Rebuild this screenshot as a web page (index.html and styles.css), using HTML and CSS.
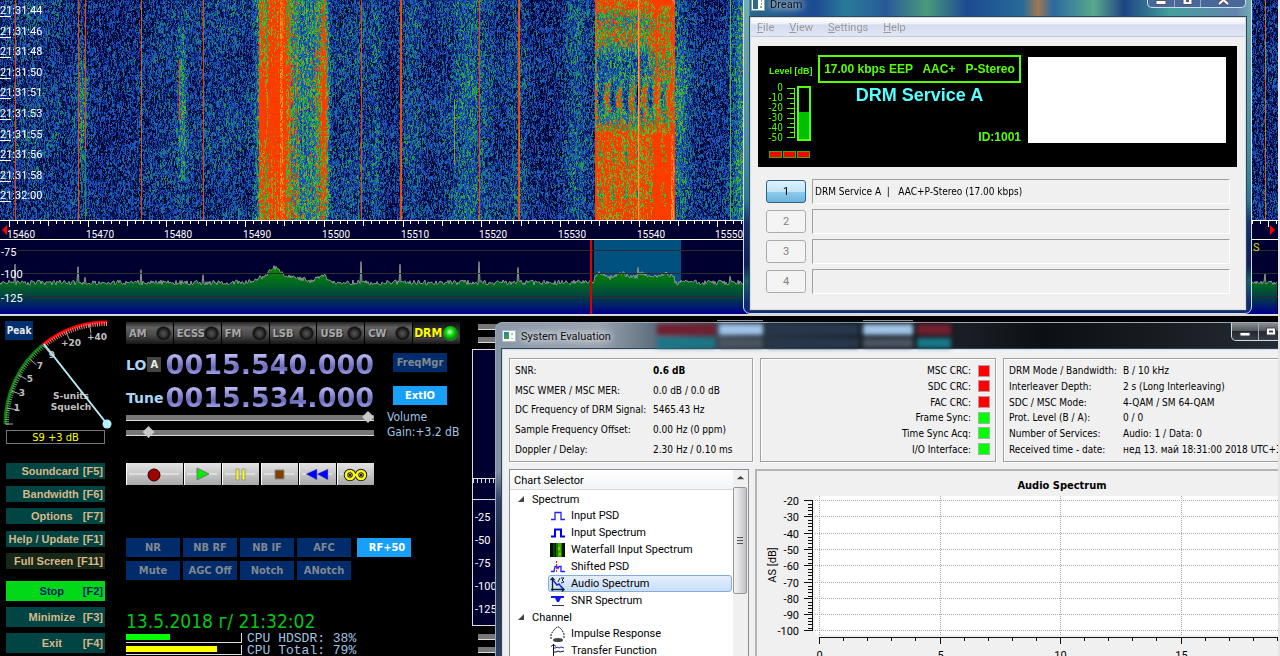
FILE: index.html
```html
<!DOCTYPE html>
<html lang="en">
<head>
    <meta charset="utf-8">
    <title>HDSDR</title>
    <link rel="stylesheet" href="styles.css">
</head>
<body>
    <div class="desktop">
        <!-- waterfall + RF spectrum -->
        <div class="rf">
            <div class="waterfall">
                <canvas id="waterfall"></canvas>
                <ul class="times">
                    <li>21:31:44</li>
                    <li>21:31:46</li>
                    <li>21:31:48</li>
                    <li>21:31:50</li>
                    <li>21:31:51</li>
                    <li>21:31:53</li>
                    <li>21:31:55</li>
                    <li>21:31:56</li>
                    <li>21:31:58</li>
                    <li>21:32:00</li>
                </ul>
            </div>
            <svg class="ruler" id="ruler"></svg>
            <svg class="spectrum" id="spectrum">
                <defs>
                    <linearGradient id="fill" gradientUnits="userSpaceOnUse" x1="0" y1="30" x2="0" y2="73">
                        <stop offset="0" stop-color="#008400"/>
                        <stop offset="0.3" stop-color="#006a20"/>
                        <stop offset="0.6" stop-color="#004440"/>
                        <stop offset="1" stop-color="#000088"/>
                    </linearGradient>
                </defs>
            </svg>
        </div>

        <div class="panel">
            <div class="side">
                <div class="meter">
                    <svg id="meter" width="115" height="113"></svg>
                    <button class="peak">Peak</button>
                </div>
                <div class="reading">S9 +3 dB</div>
                <div class="keys">
                    <button class="key"><span>Soundcard</span><span>[F5]</span></button>
                    <button class="key"><span>Bandwidth</span><span>[F6]</span></button>
                    <button class="key"><span>Options</span><span>[F7]</span></button>
                    <button class="key"><span>Help / Update</span><span>[F1]</span></button>
                    <button class="key dark"><span>Full Screen</span><span>[F11]</span></button>
                </div>
                <div class="keys big">
                    <button class="key stop"><span>Stop</span><span>[F2]</span></button>
                    <button class="key"><span>Minimize</span><span>[F3]</span></button>
                    <button class="key"><span>Exit</span><span>[F4]</span></button>
                </div>
            </div>

            <div class="center">
                <div class="modes">
                    <button class="mode">AM<i class="led"></i></button>
                    <button class="mode">ECSS<i class="led"></i></button>
                    <button class="mode">FM<i class="led"></i></button>
                    <button class="mode">LSB<i class="led"></i></button>
                    <button class="mode">USB<i class="led"></i></button>
                    <button class="mode">CW<i class="led"></i></button>
                    <button class="mode active">DRM<i class="led"></i></button>
                </div>
                <div class="tuning">
                    <div class="freq">
                        <span class="name">LO</span><button class="vfo">A</button>
                        <span class="digits">0015.540.000</span>
                    </div>
                    <button class="opt">FreqMgr</button>
                    <div class="freq">
                        <span class="name">Tune</span>
                        <span class="digits">0015.534.000</span>
                    </div>
                    <button class="opt on">ExtIO</button>
                </div>
                <div class="sliders">
                    <input type="range" id="volume" min="0" max="100" value="100">
                    <label for="volume">Volume</label>
                    <input type="range" id="gain" min="0" max="100" value="7">
                    <label for="gain">Gain:+3.2 dB</label>
                </div>
                <div class="player">
                    <button aria-label="Record"><svg width="57" height="22"><path class="rail" d="M3 11h50"/><circle cx="28" cy="12" r="6" fill="#a00000" stroke="#200"/></svg></button>
                    <button aria-label="Play"><svg width="37" height="22"><path class="rail" d="M3 11h30"/><path d="M13 5l12 6-12 6z" fill="#0e0" stroke="#777"/></svg></button>
                    <button aria-label="Pause"><svg width="37" height="22"><path class="rail" d="M3 11h30"/><path d="M14 6h3v11h-3zM20 6h3v11h-3z" fill="#ff0" stroke="#999"/></svg></button>
                    <button aria-label="Stop playback"><svg width="37" height="22"><path class="rail" d="M3 11h30"/><path d="M14 7h9v9h-9z" fill="#804000" stroke="#888"/></svg></button>
                    <button aria-label="Rewind"><svg width="37" height="22"><path class="rail" d="M3 11h30"/><path d="M18 6v11L7 11zM29 6v11l-11-6z" fill="#00f" stroke="#888" stroke-width="0.5"/></svg></button>
                    <button aria-label="Loop"><svg width="37" height="22"><path class="rail" d="M3 11h30"/><g fill="none" stroke="#222" stroke-width="4.5"><circle cx="13" cy="12" r="4"/><circle cx="24" cy="12" r="4"/></g><g fill="none" stroke="#ff0" stroke-width="2.5"><circle cx="13" cy="12" r="4"/><circle cx="24" cy="12" r="4"/><path d="M16 12h5"/></g><path d="M12 12h2M23 12h2" stroke="#222" stroke-width="2"/></svg></button>
                </div>
                <div class="dsp">
                    <button class="opt">NR</button>
                    <button class="opt">NB RF</button>
                    <button class="opt">NB IF</button>
                    <button class="opt">AFC</button>
                    <button class="opt on gain">RF+50</button>
                    <button class="opt">Mute</button>
                    <button class="opt">AGC Off</button>
                    <button class="opt">Notch</button>
                    <button class="opt">ANotch</button>
                </div>
                <div class="clock">13.5.2018 г/ 21:32:02</div>
                <div class="cpu">
                    <div class="bar"><div class="hdsdr" style="width: 38%"></div></div>
                    <span>CPU HDSDR: 38%</span>
                    <div class="bar"><div class="total" style="width: 79%"></div></div>
                    <span>CPU Total: 79%</span>
                </div>
            </div>

            <!-- AF display, mostly behind the evaluation window -->
            <div class="af">
                <i class="track"></i>
                <i class="track"></i>
                <div class="af-view">
                    <div class="af-fall"></div>
                    <div class="af-ruler"></div>
                    <ul class="af-scale">
                        <li>-25</li>
                        <li>-50</li>
                        <li>-75</li>
                        <li>-100</li>
                        <li>-125</li>
                    </ul>
                </div>
                <i class="track"></i>
                <i class="track"></i>
            </div>
        </div>

        <section class="window dream">
            <header class="title">
                <svg width="14" height="13"><rect x="0.5" y="0.5" width="13" height="12" fill="#fff" stroke="#8aa"/><path d="M2 2h5v9H2z" fill="#2a6a8a"/><path d="M10 3h1M10 6h1M9 9h2" stroke="#444"/></svg>
                <h2>Dream</h2>
                <div class="controls">
                    <button aria-label="Minimize"><svg width="13" height="10"><path d="M1 4.5h10v4H1z" fill="#fff" stroke="#556"/></svg></button>
                    <button aria-label="Maximize"><svg width="13" height="10"><path d="M2 0.5h9v8H2z" fill="#fff" stroke="#556"/><path d="M5 3h3v3H5z" fill="#556"/></svg></button>
                    <button class="close" aria-label="Close"><svg width="13" height="10"><path d="M2 0l9 8M11 0L2 8" stroke="#556" stroke-width="4"/><path d="M2 0l9 8M11 0L2 8" stroke="#fff" stroke-width="2"/></svg></button>
                </div>
            </header>
            <div class="client">
                <nav class="menu">
                    <button><u>F</u>ile</button>
                    <button><u>V</u>iew</button>
                    <button><u>S</u>ettings</button>
                    <button><u>H</u>elp</button>
                </nav>
                <div class="display">
                    <div class="level">
                        <div class="level-name">Level [dB]</div>
                        <div class="level-row">
                            <ul>
                                <li>0</li>
                                <li>-10</li>
                                <li>-20</li>
                                <li>-30</li>
                                <li>-40</li>
                                <li>-50</li>
                            </ul>
                            <svg width="8" height="54"><path d="M7.5 2v50M0 2.5h7M3 7.5h4M0 12.5h7M3 17.5h4M0 22.5h7M3 27.5h4M0 32.5h7M3 37.5h4M0 41.5h7M3 46.5h4M0 51.5h7" stroke="#5f0" fill="none"/></svg>
                            <div class="level-bar"><div style="height: 53%"></div></div>
                        </div>
                        <div class="leds"><i></i><i></i><i></i></div>
                    </div>
                    <div class="service">
                        <div class="rate">17.00 kbps EEP&nbsp;&nbsp; AAC+&nbsp;&nbsp; P-Stereo</div>
                        <div class="station">DRM Service A</div>
                        <div class="id">ID:1001</div>
                    </div>
                    <div class="logo"></div>
                </div>
                <div class="services">
                    <button class="active">1</button><input type="text" readonly aria-label="Service 1" value="DRM Service A  |   AAC+P-Stereo (17.00 kbps)">
                    <button disabled>2</button><input type="text" readonly aria-label="Service 2">
                    <button disabled>3</button><input type="text" readonly aria-label="Service 3">
                    <button disabled>4</button><input type="text" readonly aria-label="Service 4">
                </div>
            </div>
        </section>

        <section class="window evaluation">
            <header class="title">
                <svg width="14" height="12"><rect x="0.5" y="0.5" width="13" height="11" fill="#fff" stroke="#abc"/><path d="M2 2h5v7H2z" fill="#2a8a9a"/><path d="M2 6l5-3v6H2z" fill="#3a9a5a"/><path d="M10 3v2M10 8v1" stroke="#777"/></svg>
                <h2>System Evaluation</h2>
                <div class="glass">
                    <span class="red"></span><span class="light"></span><span class="blue"></span><span class="light"></span><span class="red short"></span>
                    <span class="teal"></span><span class="gray"></span><span class="blue"></span><span class="gray"></span><span class="teal short"></span>
                </div>
                <div class="controls">
                    <button aria-label="Minimize"><svg width="13" height="10"><path d="M1 5.5h10v3.5H1z" fill="#fff" stroke="#445"/></svg></button>
                    <button aria-label="Maximize"><svg width="13" height="10"><path d="M1.5 1h9v7h-9z" fill="#fff" stroke="#445"/><path d="M4 3.5h4v2H4z" fill="#445"/></svg></button>
                    <button class="close" aria-label="Close"></button>
                </div>
            </header>
            <div class="client">
                <div class="stats">
                    <dl class="group signal">
                        <dt>SNR:</dt><dd><b>0.6 dB</b></dd>
                        <dt>MSC WMER / MSC MER:</dt><dd>0.0 dB / 0.0 dB</dd>
                        <dt>DC Frequency of DRM Signal:</dt><dd>5465.43 Hz</dd>
                        <dt>Sample Frequency Offset:</dt><dd>0.00 Hz (0 ppm)</dd>
                        <dt>Doppler / Delay:</dt><dd>2.30 Hz / 0.10 ms</dd>
                    </dl>
                    <dl class="group checks">
                        <dt>MSC CRC:</dt><dd class="bad"></dd>
                        <dt>SDC CRC:</dt><dd class="bad"></dd>
                        <dt>FAC CRC:</dt><dd class="bad"></dd>
                        <dt>Frame Sync:</dt><dd></dd>
                        <dt>Time Sync Acq:</dt><dd></dd>
                        <dt>I/O Interface:</dt><dd></dd>
                    </dl>
                    <dl class="group info">
                        <dt>DRM Mode / Bandwidth:</dt><dd>B / 10 kHz</dd>
                        <dt>Interleaver Depth:</dt><dd>2 s (Long Interleaving)</dd>
                        <dt>SDC / MSC Mode:</dt><dd>4-QAM / SM 64-QAM</dd>
                        <dt>Prot. Level (B / A):</dt><dd>0 / 0</dd>
                        <dt>Number of Services:</dt><dd>Audio: 1 / Data: 0</dd>
                        <dt>Received time - date:</dt><dd>нед 13. май 18:31:00 2018 UTC+3</dd>
                    </dl>
                </div>
                <div class="charts">
                    <div class="selector">
                        <div class="tree">
                            <div class="tree-head">Chart Selector</div>
                            <ul>
                                <li class="branch">Spectrum</li>
                                <li><svg width="16" height="16"><path d="M1 11.5h4v-7h6v7h4" fill="none" stroke="#22f" stroke-width="1.3"/></svg>Input PSD</li>
                                <li><svg width="16" height="16"><path d="M1 11.5h4v-7h6v7h4" fill="none" stroke="#00e" stroke-width="2"/></svg>Input Spectrum</li>
                                <li><svg width="16" height="16"><path d="M0 1h15v14H0z" fill="#010"/><path d="M3 1h2v14H3z" fill="#041"/><path d="M6 1h6v14H6z" fill="#170"/><path d="M8 1h3v14H8z" fill="#4a0"/><path d="M8 5h2v3H8zM9 11h2v2H9z" fill="#8c0"/></svg>Waterfall Input Spectrum</li>
                                <li><svg width="16" height="16"><path d="M1 12.5h3l1-5h2l1 2 1-2h2v5h4" fill="none" stroke="#22f" stroke-width="1.3"/><path d="M6.5 2v12" stroke="#e22" stroke-dasharray="2 1"/></svg>Shifted PSD</li>
                                <li class="selected"><svg width="16" height="16"><path d="M2.5 15V2M0.5 4l2-2 2 2M1 13.5h13M12 11.5l2 2-2 2" fill="none" stroke="#123" stroke-width="1.3"/><path d="M3 4l4 5 2-1 4 5" fill="none" stroke="#22c" stroke-width="1.5"/><path d="M8 6l2-4M11 2h3l-2 2 2 2-3 1" fill="none" stroke="#123"/></svg>Audio Spectrum</li>
                                <li><svg width="16" height="16"><path d="M1 3h13v2h-3L9 9H7L5 5H1z" fill="#11f"/><path d="M2 12.5h12" stroke="#333"/></svg>SNR Spectrum</li>
                                <li class="branch">Channel</li>
                                <li><svg width="16" height="16"><path d="M1 13V8l3-4 3-3h2l3 3 2 4v5" fill="none" stroke="#111" stroke-dasharray="2 1"/><ellipse cx="8" cy="14" rx="5" ry="2" fill="#444"/></svg>Impulse Response</li>
                                <li><svg width="16" height="16"><path d="M3.5 1v15M1 3.5l2.5-2 2.5 2M1 13.5h14" fill="none" stroke="#111"/><path d="M4 5h2l1-1 2 1 2-1 3 1" fill="none" stroke="#22d"/><path d="M4 9h2l2-1 2 1 4-1" fill="none" stroke="#111"/></svg>Transfer Function</li>
                            </ul>
                        </div>
                        <div class="scroll"><i class="up"></i><i class="thumb"></i></div>
                    </div>
                    <div class="chart">
                        <h3>Audio Spectrum</h3>
                        <svg id="chart"></svg>
                    </div>
                </div>
            </div>
        </section>
    </div>

    <script src="script.js"></script>
</body>
</html>
```

FILE: styles.css
```css
* {
    box-sizing: border-box;
}

body {
    margin: 0;
    background: #e4e4e4;
    font-family: "DejaVu Sans Condensed", "DejaVu Sans", sans-serif;
    font-size: 11px;
}

button {
    margin: 0;
    padding: 0;
    border: 0;
    font: inherit;
    color: inherit;
    background: none;
}

ul, dl, dd, h2, h3 {
    margin: 0;
    padding: 0;
    list-style: none;
}

svg {
    display: block;
}

.desktop {
    position: relative;
    height: 100vh;
    margin-right: 2px;
    background: #000;
    overflow: hidden;
}

/* RF display */

.rf {
    border-bottom: 2px solid #d8d8d8;
    color: #fff;
}

.waterfall {
    position: relative;
    height: 220px;
}

.waterfall canvas {
    display: block;
    width: 100%;
    height: 220px;
}

.times {
    position: absolute;
    left: 0;
    top: 0;
    height: 206px;
    display: flex;
    flex-direction: column;
}

.times li {
    flex: 1;
    line-height: 16px;
    padding-top: 3px;
    font-family: Roboto, sans-serif;
    background: linear-gradient(#fff, #fff) 0 16px / 11px 1px no-repeat;
}

.ruler {
    width: 100%;
    height: 20px;
    background: #000030;
}

.spectrum {
    width: 100%;
    height: 74px;
    background: #000030;
}

svg text {
    font-family: Roboto, sans-serif;
    font-size: 11px;
}

.ruler text {
    font-size: 10px;
}

/* receiver panel */

.panel {
    display: flex;
    background:
        linear-gradient(#888, #888) 717px 4px / 46px 1px no-repeat,
        linear-gradient(#888, #888) 863px 4px / 50px 1px no-repeat;
}

.side {
    width: 126px;
    padding-left: 6px;
}

.meter {
    position: relative;
    margin-left: -6px;
    height: 114px;
}

.meter text {
    font-family: "DejaVu Sans", sans-serif;
    font-size: 9px;
    font-weight: bold;
    fill: #c0c0c0;
    text-anchor: middle;
}

.peak {
    position: absolute;
    left: 5px;
    top: 5px;
    width: 28px;
    height: 19px;
    background: #003070;
    color: #e8e8e8;
    font-weight: bold;
    font-size: 10px;
}

.reading {
    width: 99px;
    height: 14px;
    border: 1px solid #777;
    color: #ff0;
    line-height: 14px;
    text-align: center;
}

.keys {
    width: 99px;
    height: 106px;
    margin-top: 19px;
    display: flex;
    flex-direction: column;
    justify-content: space-between;
}

.key {
    height: 16px;
    padding-right: 2px;
    display: flex;
    align-items: center;
    justify-content: flex-end;
    gap: 4px;
    background: #004444;
    color: #d8b888;
    font: bold 11px "Liberation Sans", sans-serif;
    white-space: nowrap;
}

.key span:first-child {
    min-width: 54px;
}

.key.dark {
    background: #182818;
}

.keys.big {
    height: 72px;
    margin-top: 12px;
}

.big .key {
    height: 20px;
}

.key.stop {
    background: #00d818;
    color: #002070;
}

.center {
    width: 346px;
}

.modes {
    width: 334px;
    height: 22px;
    margin-top: 6px;
    display: grid;
    grid-template-columns: repeat(7, 1fr);
    gap: 1px;
}

.mode {
    display: flex;
    align-items: center;
    justify-content: space-between;
    padding: 0 2px 0 3px;
    background: linear-gradient(#262626, #606060 25%, #4a4a4a 60%, #161616);
    color: #a8a8a8;
    font-size: 11px;
    font-weight: bold;
    text-shadow: 1px 1px 0 #222;
}

.led {
    width: 15px;
    height: 15px;
    margin-left: -4px;
    flex: none;
    border-radius: 50%;
    background: radial-gradient(circle, #555 0, #333 35%, #111 55%, #444 75%, #333);
}

.mode.active {
    padding-left: 1px;
    color: #ff0;
    font-size: 12px;
    background: linear-gradient(#111, #333 40%, #444 70%, #181818);
}

.active .led {
    background: radial-gradient(circle at 45% 40%, #cfc 0, #1d1 30%, #080 60%, #666 80%);
}

.tuning {
    width: 320px;
    margin-top: 4px;
    display: grid;
    grid-template-columns: 248px 54px;
    column-gap: 19px;
}

.freq {
    height: 33px;
    display: flex;
    align-items: center;
}

.name {
    color: #a8d4f8;
    font: bold 14px "DejaVu Sans", sans-serif;
}

.vfo {
    width: 14px;
    height: 15px;
    margin-left: 1px;
    background: #444;
    color: #eee;
    font-weight: bold;
}

.digits {
    margin-left: auto;
    line-height: 33px;
    font-family: "DejaVu Sans", sans-serif;
    font-size: 27px;
    font-weight: bold;
    background: linear-gradient(#b8b8f4 20%, #8484d0 45%, #6868b4 60%, #a4a4f0 80%);
    -webkit-background-clip: text;
    background-clip: text;
    color: transparent;
}

.opt {
    width: 54px;
    height: 19px;
    background: #002c6c;
    color: #808890;
    font-size: 11px;
    font-weight: bold;
}

.opt.on {
    background: #18a0f8;
    color: #fff;
}

.tuning .opt {
    margin-top: 5px;
}

.sliders {
    display: grid;
    grid-template-columns: 248px 1fr;
    column-gap: 13px;
    align-items: center;
    height: 30px;
    margin-top: -4px;
    color: #a0c4e4;
    font-size: 12px;
    line-height: 15px;
}

.sliders input {
    -webkit-appearance: none;
    appearance: none;
    width: 100%;
    height: 6px;
    margin: 0;
    background: #777;
    border-bottom: 1px solid #ddd;
}

.sliders input::-webkit-slider-thumb {
    -webkit-appearance: none;
    width: 12px;
    height: 12px;
    background: #c8c8c8;
    clip-path: polygon(50% 0, 100% 50%, 50% 100%, 0 50%);
}

.player {
    width: 248px;
    margin-top: 23px;
    display: flex;
    justify-content: space-between;
}

.player button {
    background: linear-gradient(#e4e4e4, #a8a8a8);
    border-left: 1px solid #fff;
    overflow: hidden;
}

.player button svg {
    margin-left: -1px;
}

.rail {
    stroke: #f4f4f4;
}

.dsp {
    margin-top: 53px;
    display: grid;
    grid-template-columns: repeat(4, 54px) 1fr;
    gap: 4px 3px;
}

.opt.gain {
    margin-left: 3px;
    padding-left: 6px;
}

.clock {
    margin-top: 30px;
    color: #00c818;
    font-size: 19px;
    line-height: 23px;
}

.cpu {
    display: grid;
    grid-template-columns: 116px 1fr;
    column-gap: 5px;
    color: #a0c4e4;
    font: 13px/12px "Liberation Mono", monospace;
}

.bar {
    height: 10px;
    border: 1px solid #ddd;
    border-width: 0 1px 1px 0;
    padding: 1px 0 2px;
}

.bar div {
    height: 6px;
    background: #0f0;
}

.bar .total {
    background: #ff0;
}

.af {
    flex: 1;
    padding-top: 8px;
    color: #fff;
}

.track {
    display: block;
    height: 6px;
    width: 30px;
    margin: 0 0 7px 6px;
    background: #777;
    border-bottom: 1px solid #ddd;
}

.af-view {
    height: 277px;
    margin: -1px 0 8px;
    border: 1px solid #ddd;
    background: #000030;
}

.af-fall {
    height: 128px;
}

.af-ruler {
    height: 22px;
    border: 1px solid #ddd;
    border-width: 1px 0;
    background: repeating-linear-gradient(90deg, #ddd 0 1px, transparent 1px 4px) 0 0 / 100% 4px no-repeat;
}

.af-scale {
    padding: 6px 0 0 2px;
    line-height: 23px;
    font-family: Roboto, sans-serif;
}

/* glass windows */

.window {
    position: absolute;
    border: 1px solid #223;
    border-radius: 7px;
    font-family: Roboto, sans-serif;
}

.title {
    display: flex;
    align-items: center;
    color: #111;
}

.title h2 {
    margin-left: 5px;
    font-size: 11px;
    font-weight: normal;
    text-shadow: 0 0 6px #fff, 0 0 10px #fff;
}

.controls {
    display: flex;
    margin-left: auto;
    border: 1px solid #cde;
    border-top: 0;
    border-radius: 0 0 5px 5px;
    background: linear-gradient(#789, #456);
}

.controls button {
    width: 26px;
    display: flex;
    justify-content: center;
    align-items: center;
}

.controls button + button {
    border-left: 1px solid #9ab;
}

.controls .close {
    width: 45px;
}

.client {
    border: 1px solid #cde;
    background: #f0f0f0;
    outline: 1px solid #345;
}

.dream {
    left: 743px;
    top: -10px;
    width: 509px;
    height: 324px;
    padding: 0 5px 5px 6px;
    border-color: #cde;
    background:
        linear-gradient(90deg, transparent 0 5px, #2a6a8c 6px, #1c4a92 14%, #2a7a9a 20%, #285a98 28%, #4a9a7c 36%, #1c4a92 44%, #286a98 55%, #a07850 58%, #2a6aa0 61%, #5aa88c 69%, #1e4484 75%, #44a09c 84%, #6484b0 97%, transparent) 0 0 / 100% 26px no-repeat,
        linear-gradient(#78b0b4, #4a8c9c 50%, #2e7890 65%, #18306c 72%, #101c58 85%, #1a6060 90%, #102878 97%);
}

.dream .title {
    height: 26px;
    padding-left: 1px;
}

.dream .controls {
    align-self: flex-start;
    height: 17px;
    background: #48689a;
}

.dream .controls button {
    padding-top: 4px;
}

.menu {
    height: 19px;
    padding-left: 6px;
    display: flex;
    gap: 15px;
    background: linear-gradient(#fff, #eef2fa 30%, #d4dcee 40%, #e0e6f6);
    border-bottom: 1px solid #c0c8dc;
    color: #9a9a9a;
}

.display {
    margin: 9px 8px 0 7px;
    height: 121px;
    padding: 9px 11px;
    display: flex;
    background: #000;
    color: #5f0;
    font: bold 12px "Liberation Sans", sans-serif;
}

.level {
    width: 49px;
    padding-top: 10px;
}

.level-name {
    font-size: 9px;
    line-height: 12px;
    white-space: nowrap;
}

.level-row {
    margin-top: 9px;
    display: flex;
}

.level-row ul {
    width: 14px;
    margin-right: 4px;
    margin-top: -3px;
    font: 10px/10px "DejaVu Sans Condensed", sans-serif;
    text-align: right;
    display: flex;
    flex-direction: column;
    align-items: flex-end;
}

.level-bar {
    width: 14px;
    height: 55px;
    margin-left: 2px;
    border: 2px solid #5f0;
    display: flex;
    align-items: flex-end;
}

.level-bar div {
    flex: 1;
    background: #00c000;
}

.leds {
    margin-top: 8px;
    display: flex;
    gap: 1px;
}

.leds i {
    width: 13px;
    height: 7px;
    background: #f00;
    border: 1px solid #4a0;
}

.service {
    width: 203px;
}

.rate {
    height: 28px;
    border: 2px solid #5f0;
    line-height: 25px;
    font-size: 12px;
    text-align: center;
    white-space: nowrap;
}

.station {
    color: #5ff;
    font-size: 18px;
    line-height: 24px;
    text-align: center;
}

.id {
    margin-top: 23px;
    text-align: right;
}

.logo {
    flex: 1;
    height: 86px;
    margin: 2px 0 0 7px;
    background: #fff;
}

.services {
    padding: 12px 15px 15px;
    display: grid;
    grid-template-columns: 40px 1fr;
    gap: 5px 6px;
}

.services button {
    height: 23px;
    margin-top: 1px;
    border: 1px solid #a8acb0;
    border-radius: 3px;
    background: #f4f4f4;
    color: #838383;
}

.services button.active {
    border-color: #2c628b;
    background: linear-gradient(#e0f2fc, #c0e4f6 50%, #90ccec 52%, #6cb4dc);
    color: #000;
}

.services input {
    height: 25px;
    min-width: 0;
    padding: 0 2px;
    border: 1px solid;
    border-color: #a0a0a0 #fff #fff #a0a0a0;
    background: #f0f0f0;
    font: 10px "DejaVu Sans Condensed", sans-serif;
    white-space: pre;
}

.evaluation {
    left: 495px;
    right: -61px;
    top: 322px;
    bottom: -40px;
    padding: 0 6px;
    border-color: #9ab;
    background:
        linear-gradient(90deg, #8a98a8, #9aa4b0 12%, #5c6c7c 19%, #2a3440 30%, #141a20 45%, #1a1e24 56%, #0c1014 65%, #2c3038) 0 0 / 100% 27px no-repeat,
        linear-gradient(#8090a0 40%, #304060 48%, #1c2848 60%, #384868);
    display: flex;
    flex-direction: column;
}

.evaluation .title {
    height: 26px;
    padding-right: 2px;
}

.evaluation .controls {
    align-self: flex-start;
    height: 18px;
    background: linear-gradient(#8a8e94, #555a60 45%, #24282c 50%, #3a3e44);
}

/* what shows through the title bar */
.glass {
    flex: 1;
    height: 24px;
    margin-left: 46px;
    display: grid;
    grid-template-columns: 58px 44px 92px 50px 1fr;
    grid-template-rows: 11px 10px;
    gap: 3px 4px;
    filter: blur(2px);
}

.glass .red { background: #702030; }
.glass .light { background: #a0c4e8; }
.glass .blue { background: #28384c; }
.glass .gray { background: #4a5460; }
.glass .teal { background: #187888; }
.glass .short { width: 34px; }

.evaluation .client {
    flex: 1;
    padding: 8px 6px;
    display: flex;
    flex-direction: column;
    gap: 7px;
    min-height: 0;
}

.stats {
    display: grid;
    grid-template-columns: 244px 236px 1fr;
    gap: 7px;
    height: 104px;
    font-family: "DejaVu Sans Condensed", sans-serif;
    font-size: 10px;
    white-space: nowrap;
}

.group {
    display: grid;
    padding: 2px 5px;
    border: 1px solid #a0a0a0;
    box-shadow: 1px 1px 0 #fff, inset 1px 1px 0 #fff;
    align-items: center;
}

.signal {
    grid-template-columns: 138px 1fr;
}

.checks {
    grid-template-columns: 1fr 12px;
    column-gap: 7px;
    text-align: right;
    padding: 4px 5px;
}

.info {
    grid-template-columns: 114px 1fr;
    padding: 4px 5px;
}

.checks dd {
    height: 12px;
    background: #0f0;
    border: 1px solid #9b9;
}

.checks .bad {
    background: #f00;
    border-color: #b99;
}

.charts {
    flex: 1;
    display: flex;
    gap: 6px;
    min-height: 0;
}

.selector {
    width: 240px;
    display: flex;
    border: 1px solid #888c94;
    background: #fff;
    overflow: hidden;
}

.tree {
    flex: 1;
}

.tree-head {
    height: 20px;
    padding: 4px;
    background: linear-gradient(#fff, #f2f3f5);
    border-bottom: 1px solid #d8d8dc;
}

.tree ul {
    padding-top: 1px;
}

.tree li {
    height: 17px;
    margin: 0 1px 0 38px;
    padding-left: 2px;
    display: flex;
    align-items: center;
    gap: 5px;
    white-space: nowrap;
}

.tree .branch {
    height: 16px;
    margin-left: 6px;
    gap: 8px;
}

.branch::before {
    content: '';
    width: 6px;
    height: 6px;
    background: #444;
    clip-path: polygon(100% 0, 100% 100%, 0 100%);
}

.tree .selected {
    padding-left: 1px;
    border: 1px solid #84acdd;
    border-radius: 3px;
    background: linear-gradient(#e4effc, #c8def8);
}

.scroll {
    width: 15px;
    background: #f0f0f0;
}

.up {
    display: block;
    height: 17px;
    background: #444;
    clip-path: polygon(50% 35%, 75% 55%, 25% 55%);
}

.thumb {
    display: block;
    width: 14px;
    height: 107px;
    border: 1px solid #979797;
    border-radius: 2px;
    background:
        repeating-linear-gradient(#555 0 1px, transparent 1px 3px) 3px 49px / 6px 8px no-repeat,
        linear-gradient(90deg, #f4f4f4, #dcdce0 50%, #c0c0c6);
}

.chart {
    flex: 1;
    display: flex;
    flex-direction: column;
    border: 2px solid #b4b4b4;
    border-right: 0;
    min-width: 0;
}

.chart h3 {
    width: 522px;
    height: 25px;
    margin-left: 44px;
    line-height: 24px;
    padding-top: 3px;
    text-align: center;
    font-family: "DejaVu Sans Condensed", sans-serif;
    font-size: 11px;
}

#chart {
    width: 100%;
    flex: 1;
}
```

FILE: script.js
```javascript
const NS = 'http://www.w3.org/2000/svg';

let seed = 7;
function rnd() {
    seed = (seed * 1664525 + 1013904223) % 4294967296;
    return seed / 4294967296;
}

function add(parent, tag, attrs, text) {
    const el = document.createElementNS(NS, tag);
    for (const k in attrs) el.setAttribute(k, attrs[k]);
    if (text !== undefined) el.textContent = text;
    parent.appendChild(el);
    return el;
}

function bell(x, c, w) {
    return Math.exp(-((x - c) * (x - c)) / (2 * w * w));
}

// kHz -> px
function freqX(f) {
    return 9 + (f - 15460) * 7.87;
}

const palette = [
    [0, 0, 0, 34], [0.14, 4, 14, 66], [0.3, 18, 50, 150], [0.46, 32, 90, 205],
    [0.58, 22, 125, 120], [0.72, 44, 180, 50], [0.86, 120, 180, 40],
    [0.93, 250, 60, 0], [1.2, 255, 60, 0], [1.4, 255, 165, 50]
];

function color(v) {
    v = Math.max(0, Math.min(1.39, v));
    let i = 1;
    while (palette[i][0] < v) i++;
    const a = palette[i - 1], b = palette[i];
    const t = (v - a[0]) / (b[0] - a[0]);
    return [1, 2, 3].map(n => a[n] + (b[n] - a[n]) * t);
}

// carriers: x, strength, from y, to y
const lines = [
    [15, 0.95, 0, 220], [78, 0.95, 0, 220], [85, 0.92, 0, 150], [85, 0.55, 150, 220],
    [141, 0.86, 0, 220], [141, 0.93, 48, 60], [141, 0.93, 165, 220], [179, 0.88, 60, 120],
    [203, 0.9, 0, 220], [361, 0.94, 0, 220], [400, 1, 0, 220], [401, 0.86, 0, 220],
    [454, 0.8, 100, 165], [479, 1, 0, 220], [518, 1, 0, 220], [519, 0.86, 0, 220],
    [638, 1.35, 0, 220], [639, 1.2, 0, 220], [656, 1, 0, 120], [730, 0.72, 0, 220],
    [1265, 0.84, 0, 220]
];

function signal(x, y) {
    const mid = bell(y, 110, 50);
    let h = 0.3 * bell(x, 82, 4) * mid + 0.32 * bell(x, 182, 3) * mid;
    h += 0.07 * bell(x, 360, 12) + 0.14 * bell(x, 411, 8) + 0.14 * bell(x, 470, 14);
    h += 0.12 * bell(x, 376, 4) + 0.12 * bell(x, 518, 7) + 0.14 * bell(x, 575, 8);
    h += 0.3 * bell(x, 742, 6) + 0.08 * bell(x, 235, 16);
    // big uneven patches in the noise floor
    h += 0.04 * Math.sin(x / 23) + 0.03 * Math.sin(y / 19 + x / 31) + 0.02;
    if (x > 250 && x < 335) {
        h += 0.4 * bell(x, 262, 5);
        if (x >= 259 && x < 268) h += 0.22 + 0.34 * mid;
        if (x >= 268 && x < 286) h = 0.84 + 0.1 * mid + 0.06 * Math.sin(x * 2.1);
        if (x >= 286 && x < 291) h += 0.58 + 0.16 * mid;
        if (x >= 291 && x < 299) h += 0.42 + 0.12 * mid * Math.sin(x * 2);
        if (x >= 299 && x < 319) h += 0.28 + 0.06 * Math.sin(x * 1.5);
        h += (0.5 + 0.4 * mid) * bell(x, 323, 3.5);
        if (x >= 280 && x < 283) h = 1.18;
    }
    if (x >= 595 && x < 675) {
        const col = Math.cos((x - 607) / 12.5 * 6.283 + 0.5 * Math.sin(y / 7));
        const right = 1 / (1 + Math.exp((650 - x) / 3));
        h += 0.34 + 0.22 * right + 0.04 * Math.sin(x * 1.3);
        h += 0.38 * bell(y, 0, 9) + 0.2 * bell(y, 38, 9);
        h -= 0.16 * bell(y, 64, 14) * (1 - right);
        h += 0.36 * col * bell(y, 98, 11);
        if (y > 122) h += Math.min(0.44, (y - 122) * 0.03);
        h -= 0.36 * Math.max(0, -col) * (bell(y, 153, 10) + bell(y, 194, 9));
        if (x > 670 || x < 597) h += 0.2;
    }
    if (x >= 675 && x < 720) h += 0.35 * bell(x, 675, 12) * bell(y, 110, 90);
    return h;
}

function drawWaterfall() {
    const canvas = document.getElementById('waterfall');
    const w = canvas.width = canvas.clientWidth;
    const h = canvas.height = canvas.clientHeight;
    const ctx = canvas.getContext('2d');
    const img = ctx.createImageData(w, h);
    const prev = new Array(w).fill(0.2);

    for (let y = 0; y < h; y++) {
        for (let x = 0; x < w; x++) {
            let n = Math.pow(rnd(), 1.25) * 0.58;
            // noise smears a little from row to row
            if (rnd() < 0.35) n = prev[x];
            prev[x] = n;
            const s = signal(x, y);
            let v = s + n * (s > 0.8 ? 0.4 : 1);
            if (v > 1.1 && s < 1.1) v = 1.1;
            for (const l of lines) {
                if (l[0] === x && y >= l[2] && y < l[3]) v = Math.max(v, l[1] + rnd() * 0.12);
            }
            const c = color(v);
            const i = (y * w + x) * 4;
            img.data[i] = c[0];
            img.data[i + 1] = c[1];
            img.data[i + 2] = c[2];
            img.data[i + 3] = 255;
        }
    }
    ctx.putImageData(img, 0, 0);
}

function drawRuler() {
    const svg = document.getElementById('ruler');
    const w = svg.clientWidth;
    let d = '';
    for (let f = 15460; freqX(f) < w; f++) {
        const x = Math.round(freqX(f)) + 0.5;
        d += 'M' + x + ' 1v' + (f % 10 === 0 ? 6 : f % 5 === 0 ? 5 : 3);
    }
    add(svg, 'path', { d: d + 'M0 0.5h' + w + 'M0 19.5h' + w, stroke: '#fff' });
    for (let f = 15460; f <= 15550; f += 10) {
        add(svg, 'text', { x: Math.round(freqX(f)) - 2, y: 18, fill: '#fff' }, f);
    }
    add(svg, 'path', { d: 'M0 7h8v12h-8z', fill: '#000030' });
    add(svg, 'path', { d: 'M2 10l5-5v10zM' + (w - 3) + ' 10l-5-5v10z', fill: '#f00' });
}

function drawSpectrum() {
    const svg = document.getElementById('spectrum');
    const w = svg.clientWidth;
    const peaks = { 15: 16, 78: 14, 85: 6, 141: 11, 203: 7, 361: 19, 400: 18, 479: 19, 518: 15, 638: 10, 730: 7, 1265: 7 };
    let d = 'M0 43';
    for (let x = 1; x < w; x++) {
        let y = 43 - (rnd() - 0.4) * 5;
        y -= 9 * bell(x, 274, 12) + 6 * bell(x, 276, 5) + 7 * bell(x, 322, 5) + 3 * bell(x, 300, 9);
        if (x > 594 && x < 675) y -= 7 + 2 * Math.sin(x / 3.5);
        if (peaks[x]) y -= peaks[x];
        d += 'L' + x + ' ' + y.toFixed(1);
    }
    add(svg, 'rect', { x: 594, y: 0, width: 87, height: 46, fill: '#005080' });
    add(svg, 'path', { d: d + 'V74H0z', fill: 'url(#fill)' });
    add(svg, 'path', { d: d, fill: 'none', stroke: '#8c968c' });
    add(svg, 'path', { d: 'M18 10.5H' + w + 'M22 33.5H' + w + 'M22 56.5H' + w, stroke: '#2c2c2c' });
    add(svg, 'path', { d: 'M591 0v74', stroke: '#d80000', 'stroke-width': 2 });
    [['-75', 16], ['-100', 38], ['-125', 62]].forEach(l => {
        add(svg, 'text', { x: 1, y: l[1], fill: '#fff' }, l[0]);
    });
    add(svg, 'text', { x: 1253, y: 11, fill: '#dd0' }, 'S');
}

function drawMeter() {
    const svg = document.getElementById('meter');
    const cx = 107, cy = 108;
    const pt = (deg, r) => {
        const a = deg * Math.PI / 180;
        return (cx - r * Math.cos(a)).toFixed(1) + ' ' + (cy - r * Math.sin(a)).toFixed(1);
    };
    add(svg, 'path', { d: 'M' + pt(0, 102) + 'A102 102 0 0 1 ' + pt(51, 102), fill: 'none', stroke: '#087808', 'stroke-width': 3 });
    add(svg, 'path', { d: 'M' + pt(51, 102) + 'A102 102 0 0 1 ' + pt(90, 102), fill: 'none', stroke: '#f00', 'stroke-width': 3 });
    let green = '', red = '', long = 'M' + pt(0, 101) + 'L' + pt(0, 94);
    for (let a = 0; a <= 90; a += 1.3) {
        const t = 'M' + pt(a, 102) + 'L' + pt(a, 98);
        if (a < 51) green += t; else red += t;
    }
    [9, 19, 29, 40, 51, 66, 80].forEach(a => {
        long += 'M' + pt(a, 101) + 'L' + pt(a, 92);
    });
    add(svg, 'path', { d: green, stroke: '#6a6' });
    add(svg, 'path', { d: red, stroke: '#f88' });
    add(svg, 'path', { d: long, stroke: '#aaa' });
    [['1', 17, 95], ['3', 22, 80], ['5', 30, 66], ['7', 40, 53], ['9', 52, 42], ['+20', 71, 30], ['+40', 97, 24],
     ['S-units', 71, 83], ['Squelch', 71, 94]].forEach(l => {
        add(svg, 'text', { x: l[1], y: l[2] }, l[0]);
    });
    add(svg, 'path', { d: 'M44 28L107 108', stroke: '#b8ecf8', 'stroke-width': 2 });
    add(svg, 'circle', { cx: cx, cy: cy, r: 4.5, fill: '#b8f0ff' });
}

function drawChart() {
    const svg = document.getElementById('chart');
    const w = svg.clientWidth;
    const left = 55, zero = 62, step = 16.3;
    let grid = '', ticks = 'M' + left + '.5 4v131';
    add(svg, 'rect', { x: 58, y: 0, width: w, height: 139, fill: '#fff' });
    for (let i = 0; i <= 8; i++) {
        const y = Math.round(4 + i * step) + 0.5;
        grid += 'M58 ' + y + 'H' + w;
        ticks += 'M' + (left - 8) + ' ' + y + 'h8';
        for (let k = 1; k < 5 && i < 8; k++) {
            ticks += 'M' + (left - 4) + ' ' + (Math.round(y + k * step / 5) + 0.5) + 'h4';
        }
        add(svg, 'text', { x: 42, y: y + 4, 'text-anchor': 'end' }, -20 - i * 10);
    }
    ticks += 'M' + zero + ' 141.5H' + w;
    for (let i = 0; zero + i * 24.1 < w; i++) {
        const x = Math.round(zero + i * 24.1) + 0.5;
        ticks += 'M' + x + ' 141v' + (i % 5 === 0 ? 7 : 4);
        if (i % 5 === 0) {
            grid += 'M' + x + ' 0V139';
            add(svg, 'text', { x: x, y: 163, 'text-anchor': 'middle' }, i);
        }
    }
    add(svg, 'path', { d: grid, stroke: '#aaa', 'stroke-dasharray': '1 1' });
    add(svg, 'path', { d: ticks, stroke: '#111' });
    add(svg, 'text', { transform: 'translate(19 69) rotate(-90)', 'text-anchor': 'middle' }, 'AS [dB]');
}

drawWaterfall();
drawRuler();
drawSpectrum();
drawMeter();
drawChart();
```
